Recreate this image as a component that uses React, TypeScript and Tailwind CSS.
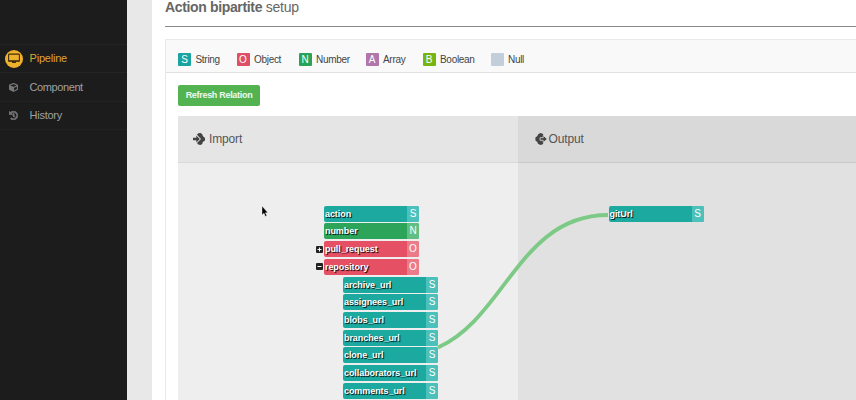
import { FaCube, FaHistory } from "react-icons/fa";

const sans = "font-['Liberation_Sans',Arial,sans-serif]";

type Kind = "S" | "O" | "N";

const kinds: Record<Kind, { body: string; tag: string }> = {
  S: { body: "bg-[#1ba9a0]", tag: "bg-[#4cc0bb]" },
  O: { body: "bg-[#e55064]", tag: "bg-[#ec7b8a]" },
  N: { body: "bg-[#2ca55b]", tag: "bg-[#61be85]" },
};

const legend = [
  { letter: "S", label: "String", color: "bg-[#1ba3a2]", width: "w-[58.5px]" },
  { letter: "O", label: "Object", color: "bg-[#e04e66]", width: "w-[62px]" },
  { letter: "N", label: "Number", color: "bg-[#28a458]", width: "w-[67px]" },
  { letter: "A", label: "Array", color: "bg-[#b077ac]", width: "w-[57px]" },
  { letter: "B", label: "Boolean", color: "bg-[#77b512]", width: "w-[68px]" },
  { letter: "", label: "Null", color: "bg-[#c3cedb]", width: "w-[50px]" },
];

const fields: { name: string; kind: Kind; toggle?: "+" | "-"; nested?: boolean }[] = [
  { name: "action", kind: "S" },
  { name: "number", kind: "N" },
  { name: "pull_request", kind: "O", toggle: "+" },
  { name: "repository", kind: "O", toggle: "-" },
  { name: "archive_url", kind: "S", nested: true },
  { name: "assignees_url", kind: "S", nested: true },
  { name: "blobs_url", kind: "S", nested: true },
  { name: "branches_url", kind: "S", nested: true },
  { name: "clone_url", kind: "S", nested: true },
  { name: "collaborators_url", kind: "S", nested: true },
  { name: "comments_url", kind: "S", nested: true },
];

function Node({ name, kind }: { name: string; kind: Kind }) {
  return (
    <div className={`flex h-[16px] w-[95px] overflow-hidden rounded-[2px] text-[9px] leading-[16px] text-white ${kinds[kind].body}`}>
      <span className="flex-1 whitespace-nowrap pl-[1px] font-bold tracking-[-0.07px] [text-shadow:1px_1px_1px_#0008,1px_1px_0_#0009]">{name}</span>
      <span className={`w-3 text-center text-[10px] ${kinds[kind].tag}`}>{kind}</span>
    </div>
  );
}

function MonitorIcon() {
  return (
    <svg viewBox="0 0 18 18" className="size-[18px]">
      <circle cx="9" cy="9" r="9" fill="#efb02c" />
      <rect x="3.6" y="4.1" width="10.8" height="7.2" rx="0.7" fill="none" stroke="#40300f" strokeWidth="1.1" />
      <path d="M3.3 10.2h11.4v1.4H11v1.5H7v-1.5H3.3z" fill="#40300f" />
    </svg>
  );
}

function ImportIcon() {
  return (
    <svg viewBox="0 0 12 12" className="h-3 w-3">
      <path d="M4 1.7 5.2.3 7.6 0 9.3 1.2 9.8 3 12 5v2.4L9.8 9l-.6 2-1.7 1-2.3-.4-1.2-1.6 4-4z" fill="#444" />
      <path d="M0 4.8h3.3V2.6L6.8 6 3.3 9.4V7.2H0z" fill="#444" />
    </svg>
  );
}

function OutputIcon() {
  return (
    <svg viewBox="0 0 12 12" className="h-3 w-3">
      <path d="M3 1.5 5.2 0 7.8.8 8.8 3v6l-1 2.3-2.4.7L3 10.7 2.3 9 .4 7.6V4.4L2.4 3z" fill="#444" />
      <path d="M5 4.7h3.2V2.4L12.4 6 8.2 9.6V7.3H5z" fill="#444" stroke="#d9d9d9" strokeWidth=".8" />
    </svg>
  );
}

export default function App() {
  return (
    <div className={`relative flex h-[400px] w-[856px] overflow-hidden bg-[#e8e8e8] ${sans}`}>
      <aside className="w-[127px] shrink-0 bg-[#1c1c1c] pt-[44px] text-[11px] tracking-[-0.25px] text-[#a0a0a0]">
        <div className="flex h-[29px] items-center border-y border-[#242424] pl-[5px] text-[#dda632]">
          <MonitorIcon />
          <span className="-mt-px ml-[6.5px] tracking-[-0.2px]">Pipeline</span>
        </div>
        <div className="flex h-7 items-center pl-[9px]">
          <FaCube className="size-[9px] text-[#777]" />
          <span className="ml-[11.5px] tracking-[-0.4px]">Component</span>
        </div>
        <div className="flex h-[29px] items-center border-y border-[#222] pl-[9px]">
          <FaHistory className="size-[9px] text-[#777]" strokeWidth="40" stroke="currentColor" />
          <span className="-mt-px ml-[11.5px]">History</span>
        </div>
      </aside>
      <main className="ml-[25px] flex flex-1 flex-col overflow-hidden bg-white pl-[13px]">
        <h1 className="h-[27px] shrink-0 whitespace-nowrap border-b border-[#888] text-[14px] leading-[14px] tracking-[-0.25px] text-[#666]">
          <b className="tracking-[-0.35px]">Action bipartite</b> setup
        </h1>
        <section className="mt-3 flex flex-1 flex-col border-l border-t border-[#e8e8e8]">
          <div className="flex h-[33px] shrink-0 border-b border-[#e2e2e2] bg-[#f9f9f9] pl-3 pt-[13px] text-[10px] text-[#444]">
            {legend.map((item) => (
              <div key={item.label} className={`flex h-[13px] shrink-0 items-center gap-[4.5px] ${item.width}`}>
                <span className={`size-[13px] shrink-0 rounded-[1px] text-center leading-[13px] text-white ${item.color}`}>{item.letter}</span>
                <span className="tracking-[-0.3px]">{item.label}</span>
              </div>
            ))}
          </div>
          <div className="pl-3 pt-3">
            <button className="block h-[21px] w-[82px] whitespace-nowrap rounded-[2px] bg-[#53b351] pt-px text-[9px] font-bold tracking-[-0.3px] text-white/90">Refresh Relation</button>
          </div>
          <div className="ml-3 mt-[10px] flex flex-1">
            <div className="w-[340px] bg-[#eee]">
              <div className="flex h-[47px] items-center gap-1 border-b border-[#dadada] bg-[#e5e5e5] pl-[15px] text-[12px] tracking-[-0.15px] text-[#555]">
                <ImportIcon />
                <span>Import</span>
              </div>
              <div className="flex flex-col gap-[1.7px] pl-[137px] pt-[42.8px]">
                {fields.map((field) => (
                  <div key={field.name} className={`flex items-center ${field.nested ? "pl-[28px]" : ""}`}>
                    {!field.nested && (
                      <span className="mr-px flex w-[8px] justify-end">
                        {field.toggle && (
                          <svg viewBox="0 0 7 7" className="size-[7px] shrink-0">
                            <rect width="7" height="7" rx="1" fill="#222" />
                            <path d={field.toggle === "+" ? "M1.5 3.5h4M3.5 1.5v4" : "M1.5 3.5h4"} stroke="#fff" />
                          </svg>
                        )}
                      </span>
                    )}
                    <Node name={field.name} kind={field.kind} />
                  </div>
                ))}
              </div>
            </div>
            <div className="flex-1 bg-[#e1e1e1]">
              <div className="flex h-[47px] items-center gap-[1.5px] border-b border-[#c9c9c9] bg-[#d9d9d9] pl-[17px] text-[12px] tracking-[-0.15px] text-[#555]">
                <OutputIcon />
                <span>Output</span>
              </div>
              <div className="pl-[90.5px] pt-[42.8px]">
                <Node name="gitUrl" kind="S" />
              </div>
            </div>
          </div>
        </section>
      </main>
      <svg className="pointer-events-none absolute inset-0" width="856" height="400">
        <path d="M438 347.5C505 318 520 215 608 215" fill="none" stroke="#7dca86" strokeWidth="3.8" />
        <path d="M262 206v9l2-1.7 1.4 3.2 1.4-.7-1.4-3h2.5z" fill="#000" stroke="#fff" strokeWidth=".4" />
      </svg>
    </div>
  );
}
